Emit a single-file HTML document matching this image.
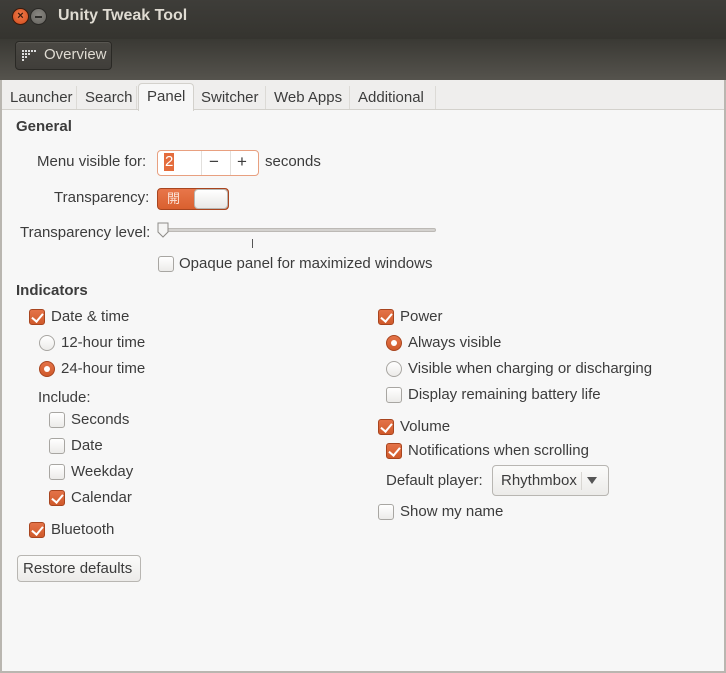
<!DOCTYPE html>
<html><head><meta charset="utf-8"><style>
*{box-sizing:border-box;margin:0;padding:0}
body{width:726px;height:673px;overflow:hidden;background:#f7f7f7;font-family:"Liberation Sans","Noto Sans CJK JP",sans-serif;font-size:15px;color:#3c3c3c;position:relative}
.a{position:absolute;white-space:nowrap;line-height:20px}
#title{position:absolute;left:0;top:0;width:726px;height:39px;background:linear-gradient(#3e3d39,#35342f);}
#tb{position:absolute;left:0;top:39px;width:726px;height:41px;background:linear-gradient(#3a3934,#55534d);}
#tabs{position:absolute;left:0;top:80px;width:726px;height:30px;background:#efeeed;}
.tab{position:absolute;top:6px;height:24px;line-height:24px;border-right:1px solid #dcdad6;padding-left:8px;font-size:15px;color:#3c3c3c}
#panel{position:absolute;left:2px;top:109px;width:722px;height:562px;background:#f7f7f7;border-top:1px solid #d3d1cc}
.cb{position:absolute;width:16px;height:16px;border:1px solid #a8a6a2;border-radius:3px;background:linear-gradient(#fff,#ecebe9)}
.cb.on{background:linear-gradient(#e47348,#d05a2b);border-color:#a8451f}
.cb.on::after{content:"";position:absolute;left:4px;top:1px;width:5px;height:9px;border:solid #fff;border-width:0 2.5px 2.5px 0;transform:rotate(40deg)}
.rb{position:absolute;width:16px;height:16px;border:1px solid #a8a6a2;border-radius:50%;background:linear-gradient(#fff,#ecebe9)}
.rb.on{background:linear-gradient(#e47348,#d05a2b);border-color:#a8451f}
.rb.on::after{content:"";position:absolute;left:4px;top:4px;width:6px;height:6px;border-radius:50%;background:#fff}
.b{font-weight:bold}
</style></head><body>
<div id="title">
 <div style="position:absolute;left:12px;top:8px;width:17px;height:17px;border-radius:50%;background:radial-gradient(circle at 50% 40%,#f07a4a,#d24c1c);border:1px solid #3a1a0c;color:#3a1a0c;font-size:11px;line-height:15px;text-align:center;font-weight:bold">×</div>
 <div style="position:absolute;left:30px;top:8px;width:17px;height:17px;border-radius:50%;background:radial-gradient(circle at 50% 40%,#8a8883,#64625d);border:1px solid #2a2926"><div style="position:absolute;left:4px;top:7px;width:7px;height:2px;background:#2e2d2a"></div></div>
 <div class="a b" style="left:58px;top:6px;color:#dfdbd2;font-size:16px">Unity Tweak Tool</div>
</div>
<div id="tb">
 <div style="position:absolute;left:15px;top:2px;width:97px;height:29px;border:1px solid #2a2925;border-radius:4px;background:linear-gradient(#4a4843,#403e3a);box-shadow:inset 0 1px rgba(255,255,255,.08)"></div>
 <svg style="position:absolute;left:22px;top:11px" width="14" height="11"><g fill="#ddd"><rect x="0" y="0" width="2" height="2"/><rect x="3" y="0" width="2" height="2"/><rect x="6" y="0" width="2" height="2"/><rect x="9" y="0" width="2" height="2"/><rect x="12" y="0" width="2" height="2"/><rect x="0" y="3" width="2" height="2"/><rect x="3" y="3" width="2" height="2"/><rect x="6" y="3" width="2" height="2"/><rect x="0" y="6" width="2" height="2"/><rect x="3" y="6" width="2" height="2"/><rect x="0" y="9" width="2" height="2"/></g></svg>
 <div class="a" style="left:44px;top:6px;color:#dfdbd2;font-size:15px">Overview</div>
</div>
<div id="tabs">
 <div class="tab" style="left:2px;width:75px">Launcher</div>
 <div class="tab" style="left:77px;width:60px">Search</div>
 <div class="tab" style="left:193px;width:73px">Switcher</div>
 <div class="tab" style="left:266px;width:84px">Web Apps</div>
 <div class="tab" style="left:350px;width:86px">Additional</div>
</div>
<div id="panel"></div>
<div style="position:absolute;left:138px;top:83px;width:56px;height:28px;background:#f7f7f7;border:1px solid #d3d1cc;border-bottom:none;border-radius:4px 4px 0 0;padding-left:8px;line-height:26px">Panel</div>
<div style="position:absolute;left:0;top:80px;width:2px;height:593px;background:#b9b6b0"></div>
<div style="position:absolute;right:0;top:80px;width:2px;height:593px;background:#b9b6b0"></div>
<div style="position:absolute;left:0;bottom:0;width:726px;height:2px;background:#b9b6b0"></div>

<div class="a b" style="left:16px;top:117px">General</div>
<div class="a" style="left:37px;top:152px">Menu visible for:</div>
<div style="position:absolute;left:157px;top:150px;width:102px;height:26px;border:1px solid #e8a080;border-radius:4px;background:#fff"></div>
<div style="position:absolute;left:201px;top:151px;width:1px;height:24px;background:#e2e0dd"></div>
<div style="position:absolute;left:230px;top:151px;width:1px;height:24px;background:#e2e0dd"></div>
<div class="a" style="left:164px;top:153px;line-height:18px;background:#e46c3c;color:#fff;padding:0 1px">2</div>
<div class="a" style="left:209px;top:152px;font-size:17px">−</div>
<div class="a" style="left:237px;top:152px;font-size:17px">+</div>
<div class="a" style="left:265px;top:152px">seconds</div>
<div class="a" style="left:54px;top:188px">Transparency:</div>
<div style="position:absolute;left:157px;top:188px;width:72px;height:22px;border:1px solid #a8451f;border-radius:4px;background:linear-gradient(#e8764a,#d9602f)"></div>
<div class="a" style="left:167px;top:189px;color:#fbe3d8;font-size:13px">開</div>
<div style="position:absolute;left:194px;top:189px;width:34px;height:20px;border-radius:4px;background:linear-gradient(#fff,#e9e8e6);border:1px solid #b8b6b2"></div>
<div class="a" style="left:20px;top:223px">Transparency level:</div>
<div style="position:absolute;left:162px;top:228px;width:274px;height:4px;border-radius:2px;background:#d4d2cf;border:1px solid #bcb9b5"></div>
<svg style="position:absolute;left:157px;top:222px" width="12" height="16"><path d="M1 1h10v9l-5 5l-5-5z" fill="#f5f5f4" stroke="#8e8c88"/></svg>
<div style="position:absolute;left:252px;top:239px;width:1px;height:9px;background:#555"></div>
<div class="cb" style="left:158px;top:256px"></div>
<div class="a" style="left:179px;top:254px">Opaque panel for maximized windows</div>

<div class="a b" style="left:16px;top:281px">Indicators</div>
<div class="cb on" style="left:29px;top:309px"></div><div class="a" style="left:51px;top:307px">Date &amp; time</div>
<div class="rb" style="left:39px;top:335px"></div><div class="a" style="left:61px;top:333px">12-hour time</div>
<div class="rb on" style="left:39px;top:361px"></div><div class="a" style="left:61px;top:359px">24-hour time</div>
<div class="a" style="left:38px;top:388px">Include:</div>
<div class="cb" style="left:49px;top:412px"></div><div class="a" style="left:71px;top:410px">Seconds</div>
<div class="cb" style="left:49px;top:438px"></div><div class="a" style="left:71px;top:436px">Date</div>
<div class="cb" style="left:49px;top:464px"></div><div class="a" style="left:71px;top:462px">Weekday</div>
<div class="cb on" style="left:49px;top:490px"></div><div class="a" style="left:71px;top:488px">Calendar</div>
<div class="cb on" style="left:29px;top:522px"></div><div class="a" style="left:51px;top:520px">Bluetooth</div>
<div style="position:absolute;left:17px;top:555px;width:124px;height:27px;border:1px solid #b8b6b2;border-radius:4px;background:linear-gradient(#fbfbfa,#ecebe9)"></div>
<div class="a" style="left:23px;top:559px">Restore defaults</div>

<div class="cb on" style="left:378px;top:309px"></div><div class="a" style="left:400px;top:307px">Power</div>
<div class="rb on" style="left:386px;top:335px"></div><div class="a" style="left:408px;top:333px">Always visible</div>
<div class="rb" style="left:386px;top:361px"></div><div class="a" style="left:408px;top:359px">Visible when charging or discharging</div>
<div class="cb" style="left:386px;top:387px"></div><div class="a" style="left:408px;top:385px">Display remaining battery life</div>
<div class="cb on" style="left:378px;top:419px"></div><div class="a" style="left:400px;top:417px">Volume</div>
<div class="cb on" style="left:386px;top:443px"></div><div class="a" style="left:408px;top:441px">Notifications when scrolling</div>
<div class="a" style="left:386px;top:471px">Default player:</div>
<div style="position:absolute;left:492px;top:465px;width:117px;height:31px;border:1px solid #b8b6b2;border-radius:4px;background:linear-gradient(#fbfbfa,#ecebe9)"></div>
<div style="position:absolute;left:581px;top:472px;width:1px;height:18px;background:#d8d6d2"></div>
<div class="a" style="left:501px;top:471px">Rhythmbox</div>
<svg style="position:absolute;left:587px;top:477px" width="10" height="8"><path d="M0 0h10l-5 7z" fill="#555"/></svg>
<div class="cb" style="left:378px;top:504px"></div><div class="a" style="left:400px;top:502px">Show my name</div>
</body></html>
